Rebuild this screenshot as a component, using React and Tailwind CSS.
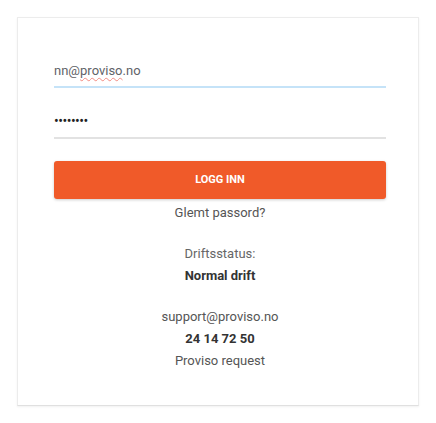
export default function App() {
  return (
    <div className="w-[436px] h-[423px] bg-white pt-[17px] pl-[17px]" style={{ fontFamily: "Roboto, 'Liberation Sans', sans-serif" }}>
      <div className="w-[402px] h-[389px] border border-[#ececec] border-b-[#e0e0e0] bg-white shadow-[0_1px_2px_rgba(0,0,0,0.06)] pt-[38px] pl-[36px] pr-[32px] flex flex-col">
        <div className="h-[32px] border-b-2 border-[#c5e3f8] flex items-center text-[13px] text-[#5f6368]">
          <span>nn@</span>
          <span className="underline decoration-wavy decoration-[#f28b82] decoration-1 underline-offset-2">proviso</span>
          <span>.no</span>
        </div>
        <div className="mt-[17px] h-[34px] border-b-2 border-[#e2e2e2] flex items-center text-[14px] text-[#222] tracking-[-0.5px]">
          ••••••••
        </div>
        <button className="mt-[22px] h-[38px] w-full rounded-[3px] bg-[#f05a29] text-white text-[11px] font-bold shadow-[0_1px_3px_rgba(0,0,0,0.2)]">
          LOGG INN
        </button>
        <div className="mt-[3px] text-center text-[13px] leading-[22px] text-[#555]">Glemt passord?</div>
        <div className="mt-[19px] text-center text-[13px] leading-[22px] text-[#666]">Driftsstatus:</div>
        <div className="text-center text-[13px] leading-[22px] font-bold text-[#333]">Normal drift</div>
        <div className="mt-[19px] text-center text-[13px] leading-[22px] text-[#555]">support@proviso.no</div>
        <div className="text-center text-[13px] leading-[22px] font-bold text-[#333]">24 14 72 50</div>
        <div className="text-center text-[13px] leading-[22px] text-[#555]">Proviso request</div>
      </div>
    </div>
  );
}
